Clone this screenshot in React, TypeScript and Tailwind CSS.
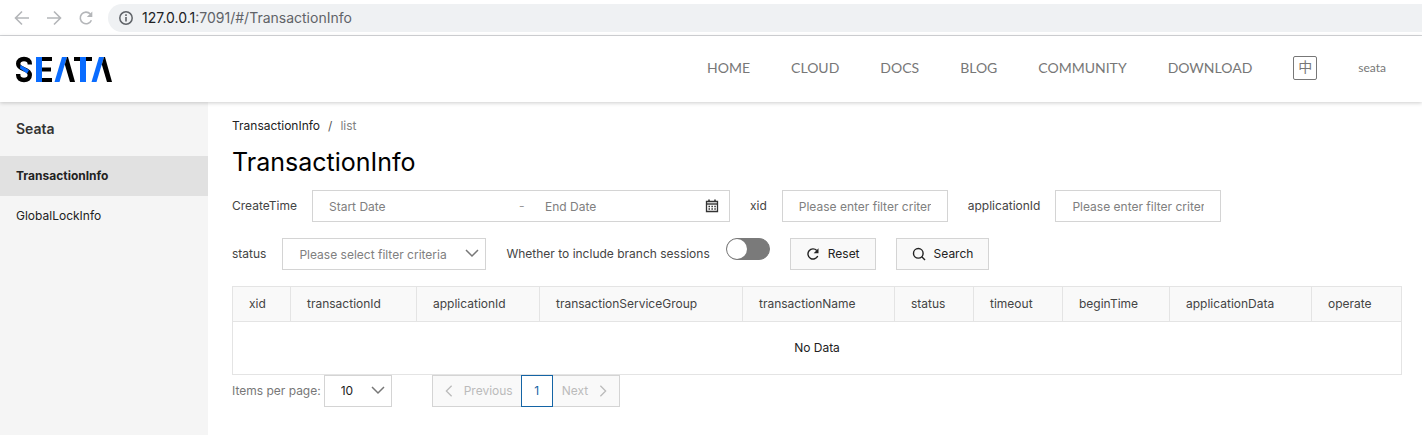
import React from "react";

const columns = [
  { name: "xid", width: "w-[58px]" },
  { name: "transactionId", width: "w-[126px]" },
  { name: "applicationId", width: "w-[123px]" },
  { name: "transactionServiceGroup", width: "w-[203px]" },
  { name: "transactionName", width: "w-[152px]" },
  { name: "status", width: "w-[79px]" },
  { name: "timeout", width: "w-[89px]" },
  { name: "beginTime", width: "w-[107px]" },
  { name: "applicationData", width: "w-[142px]" },
  { name: "operate", width: "w-[90px]" },
];

const navLinks = ["HOME", "CLOUD", "DOCS", "BLOG", "COMMUNITY", "DOWNLOAD"];

function Logo() {
  return (
    <svg width="96" height="27" viewBox="0 0 96 27" role="img" aria-label="Seata">
      <path d="M13.800 8.500V8C13.800 4.800 11.500 3 8 3S2.200 4.800 2.200 7.800C2.200 10.500 4 11.800 8 13.300S13.800 16.200 13.800 19C13.800 22.200 11.500 24 8 24S2.200 22.200 2.200 19V18" fill="none" stroke="#000" strokeWidth="4.400" />
      <path d="M4.500 9L13 14L11 17.500L4 12.500z" fill="#0a6cff" />
      <path d="M24 1H36V5H24zM24 11.500H35V15.500H24zM24 22H36V26H24z" fill="#000" />
      <path d="M20 1H26V26H20z" fill="#0a6cff" />
      <path d="M46 1H51L43.500 26H38.500z" fill="#0a6cff" />
      <path d="M51 1H52L59 26H54L48.800 8.500z" fill="#000" />
      <path d="M58 1H76V5H58z" fill="#000" />
      <path d="M64 1H70V26H64z" fill="#0a6cff" />
      <path d="M83 1H88L80.500 26H75.500z" fill="#0a6cff" />
      <path d="M88 1H89L96 26H91L85.800 8.500z" fill="#000" />
    </svg>
  );
}

function Chevron({ direction, className }: { direction: "down" | "left" | "right"; className?: string }) {
  const paths = { down: "M2 5l6 6 6-6", left: "M11 2L5 8l6 6", right: "M5 2l6 6-6 6" };
  return (
    <svg viewBox="0 0 16 16" fill="none" stroke="currentColor" strokeWidth="1.500" className={className} aria-hidden="true">
      <path d={paths[direction]} />
    </svg>
  );
}

function ReloadIcon({ className }: { className?: string }) {
  return (
    <svg viewBox="0 0 16 16" className={className} aria-hidden="true">
      <path d="M13.400 10.200A5.800 5.800 0 1 1 12.300 4" fill="none" stroke="currentColor" strokeWidth="1.600" />
      <path d="M14.300 1.500V7H8.800z" fill="currentColor" />
    </svg>
  );
}

function CalendarIcon() {
  return (
    <svg width="14" height="14" viewBox="0 0 14 14" aria-hidden="true" className="shrink-0 text-[#333]">
      <path d="M1.500 2.500H12.500V12.500H1.500z" fill="none" stroke="currentColor" strokeWidth="1.300" />
      <path d="M1 5H13" stroke="currentColor" strokeWidth="1.400" />
      <path d="M4 0.500V3M10 0.500V3" stroke="currentColor" strokeWidth="1.600" />
      <path d="M3.500 7.500H10.800M3.500 10H10.800" stroke="currentColor" strokeWidth="1.500" strokeDasharray="1.500 1.400" />
    </svg>
  );
}

function BrowserBar() {
  return (
    <div className="flex h-9 items-center border-b border-[#d5d7da] bg-white pl-3.5 text-[#b4b6b9]">
      <button aria-label="Back" className="mr-4">
        <svg width="16" height="16" viewBox="0 0 16 16" fill="none" stroke="currentColor" strokeWidth="1.600" className="block">
          <path d="M15 8H2M8 1.500L1.500 8l6.500 6.500" />
        </svg>
      </button>
      <button aria-label="Forward" className="mr-4">
        <svg width="16" height="16" viewBox="0 0 16 16" fill="none" stroke="currentColor" strokeWidth="1.600" className="block">
          <path d="M1 8H14M8 1.500l6.500 6.500L8 14.500" />
        </svg>
      </button>
      <button aria-label="Reload" className="mr-3.5">
        <ReloadIcon className="block size-4" />
      </button>
      <div className="flex h-7 flex-1 items-center rounded-l-full bg-[#eff1f3] pl-2.5 font-[Inter,sans-serif] text-sm text-[#5f6368]">
        <svg width="16" height="16" viewBox="0 0 16 16" className="mr-2" aria-hidden="true">
          <circle cx="8" cy="8" r="6.200" fill="none" stroke="currentColor" strokeWidth="1.500" />
          <path d="M8 7V11.500M8 4.300V6" stroke="currentColor" strokeWidth="1.600" />
        </svg>
        <span className="text-[#202124]">127.0.0.1</span>:7091/#/TransactionInfo
      </div>
    </div>
  );
}

function Header() {
  return (
    <header className="relative flex h-[66px] items-center justify-between bg-white pl-4 pr-9 shadow-[0_1px_4px_rgba(0,0,0,0.2)]">
      <a href="#/">
        <Logo />
      </a>
      <nav className="flex items-center gap-[41px] pb-0.5 font-[Lato,sans-serif] text-sm text-[#777]">
        {navLinks.map((name) => (
          <a key={name} href="#/">{name}</a>
        ))}
        <button className="size-6 rounded-xs border border-[#777] pb-1 font-['Noto_Sans_CJK_SC',sans-serif] text-sm leading-[18px]">中</button>
        <a href="#/" className="text-xs">seata</a>
      </nav>
    </header>
  );
}

function FilterInput({ id, label }: { id: string; label: string }) {
  return (
    <div className="flex items-center gap-[15px]">
      <label htmlFor={id}>{label}</label>
      <div className="h-8 w-[166px] border border-[#d4d4d4] px-4">
        <input id={id} placeholder="Please enter filter criteria" className="h-full w-full pt-px outline-none placeholder:text-[#808080]" />
      </div>
    </div>
  );
}

function Filters() {
  const button = "flex h-8 items-center gap-2 border border-[#d4d4d4] bg-[#f9f9f9] px-[15px] text-[#222]";
  return (
    <form className="flex flex-col gap-4">
      <div className="flex flex-wrap gap-5">
        <div className="flex items-center gap-[15px]">
          <label htmlFor="start">CreateTime</label>
          <div className="flex h-8 w-[418px] items-center border border-[#d4d4d4] pl-4 pr-2.5">
            <input id="start" placeholder="Start Date" className="h-full w-[184px] pt-px outline-none placeholder:text-[#808080]" />
            <span className="w-8 pl-1.5 text-[#999]">-</span>
            <input aria-label="End Date" placeholder="End Date" className="h-full min-w-0 flex-1 pt-px outline-none placeholder:text-[#808080]" />
            <CalendarIcon />
          </div>
        </div>
        <FilterInput id="xid" label="xid" />
        <FilterInput id="applicationId" label="applicationId" />
      </div>
      <div className="flex flex-wrap gap-5">
        <div className="flex items-center gap-4">
          <label htmlFor="status">status</label>
          <div className="relative h-8 w-[204px] border border-[#d4d4d4]">
            <select id="status" className="h-full w-full appearance-none bg-transparent pt-px pl-4 text-[#808080] outline-none">
              <option>Please select filter criteria</option>
            </select>
            <Chevron direction="down" className="pointer-events-none absolute right-[5px] top-1.5 size-4 text-[#777]" />
          </div>
        </div>
        <div className="flex gap-4">
          <label htmlFor="branch" className="leading-8">Whether to include branch sessions</label>
          <input
            id="branch"
            type="checkbox"
            role="switch"
            className="h-[22px] w-11 appearance-none rounded-full border border-[#7a7a7a] bg-[#7a7a7a] before:block before:size-5 before:rounded-full before:bg-white checked:before:ml-auto"
          />
        </div>
        <button type="button" className={button}>
          <ReloadIcon className="size-3.5" />
          Reset
        </button>
        <button type="button" className={button}>
          <svg width="14" height="14" viewBox="0 0 14 14" fill="none" stroke="currentColor" strokeWidth="1.400" aria-hidden="true">
            <circle cx="6.300" cy="6.300" r="4.800" />
            <path d="M9.800 9.800L13 13" />
          </svg>
          Search
        </button>
      </div>
    </form>
  );
}

function Results() {
  return (
    <table className="mt-4 w-full table-fixed border-collapse border border-[#e4e4e4]">
      <thead className="bg-[#f9f9f9] text-left">
        <tr className="h-[35px]">
          {columns.map((column) => (
            <th key={column.name} className={`${column.width} border border-[#e4e4e4] pl-4 font-normal`}>{column.name}</th>
          ))}
        </tr>
      </thead>
      <tbody>
        <tr className="h-[53px]">
          <td colSpan={columns.length} className="text-center text-[#222]">No Data</td>
        </tr>
      </tbody>
    </table>
  );
}

function Pagination() {
  return (
    <div className="flex items-center">
      <label htmlFor="pageSize" className="mr-[3px] text-[#777]">Items per page:</label>
      <div className="relative mr-10 h-8 w-[68px] border border-[#d4d4d4]">
        <select id="pageSize" className="h-full w-full appearance-none bg-transparent pl-4 text-[#222] outline-none">
          <option>10</option>
        </select>
        <Chevron direction="down" className="pointer-events-none absolute right-[5px] top-1.5 size-4 text-[#777]" />
      </div>
      <button disabled className="flex h-8 w-[89px] items-center gap-2 border border-r-0 border-[#d4d4d4] bg-[#f9f9f9] pl-[9px] text-[#bbb]">
        <Chevron direction="left" className="size-3.5" />
        Previous
      </button>
      <button aria-current="page" className="h-8 w-8 border border-[#1464a5] text-[#1464a5]">1</button>
      <button disabled className="flex h-8 w-[67px] items-center gap-2 border border-l-0 border-[#d4d4d4] bg-[#f9f9f9] pl-[9px] text-[#bbb]">
        Next
        <Chevron direction="right" className="size-3.5" />
      </button>
    </div>
  );
}

export default function App() {
  return (
    <div className="flex min-h-screen flex-col bg-white font-[Inter,sans-serif] text-xs text-[#444]">
      <BrowserBar />
      <Header />
      <div className="flex flex-1">
        <aside className="w-52 shrink-0 bg-[#f5f5f5] text-[#222]">
          <h2 className="px-4 text-sm leading-[54px] font-semibold text-[#333]">Seata</h2>
          <a href="#/TransactionInfo" className="block bg-[#e1e1e1] px-4 leading-10 font-bold">TransactionInfo</a>
          <a href="#/GlobalLockInfo" className="block px-4 leading-10">GlobalLockInfo</a>
        </aside>
        <main className="min-w-0 flex-1 pt-4 pl-6 pr-[21px]">
          <div className="flex gap-2 text-[#222]">
            <a href="#/TransactionInfo">TransactionInfo</a>
            <span className="text-[#555]">/</span>
            <span className="text-[#808080]">list</span>
          </div>
          <h1 className="mt-2 mb-2 text-[25px] leading-10 text-black">TransactionInfo</h1>
          <Filters />
          <Results />
          <Pagination />
        </main>
      </div>
    </div>
  );
}
